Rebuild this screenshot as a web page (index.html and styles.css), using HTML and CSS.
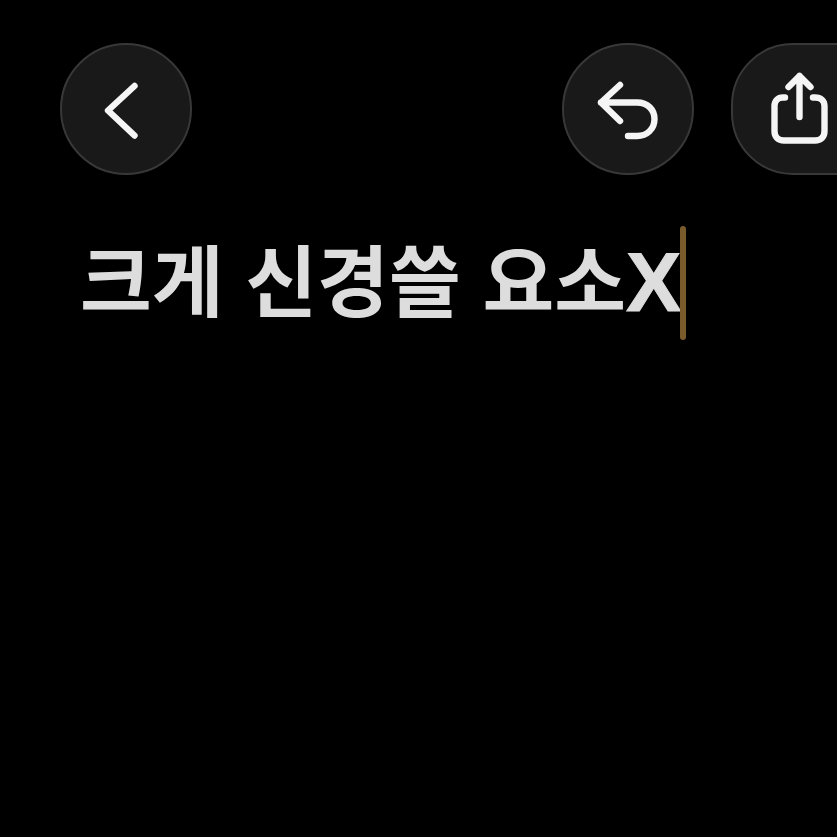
FILE: index.html
```
<!DOCTYPE html>
<html lang="ko">
<head>
<meta charset="utf-8">
<title>크게 신경쓸 요소X</title>
<link rel="stylesheet" href="styles.css">
</head>
<body>
<div class="screen">
  <header class="toolbar">
    <button class="round" aria-label="뒤로">
      <svg class="icon" viewBox="0 0 127 127"><path d="M71.500 40 L45 64.500 L71.500 89.500"/></svg>
    </button>
    <div class="spacer"></div>
    <button class="round" aria-label="실행 취소">
      <svg class="icon" viewBox="0 0 127 127"><path d="M55 39 L36 56.500 L55 75 M36 56.500 H72 C83 56.500 89.500 64 89.500 73 C89.500 83 82 90 72 90 H63"/></svg>
    </button>
    <button class="round wide" aria-label="공유">
      <svg class="icon" viewBox="0 0 127 127"><path d="M65.500 71 V30 M54.500 41 L65.500 30 L76.500 41 M51 51.500 H49 C43.500 51.500 40.500 55 40.500 60 V85 C40.500 91 44 94.500 50 94.500 H81 C87 94.500 90.500 91 90.500 85 V60 C90.500 55 87 51.500 81 51.500 H79"/></svg>
    </button>
  </header>
  <div class="editor">
    <h1 class="title">크게 신경쓸 요소<span class="latin">X</span></h1><span class="caret"></span>
  </div>
</div>
</body>
</html>
```
FILE: styles.css
```
html, body {
  margin: 0;
  padding: 0;
  background: #000;
}
.screen {
  width: 837px;
  height: 837px;
  overflow: hidden;
  background: #000;
}
.toolbar {
  display: flex;
  align-items: center;
  gap: 37px;
  padding: 43px 0 0 60px;
  width: 1000px;
}
.spacer {
  width: 296px;
}
.round {
  flex: none;
  width: 132px;
  height: 132px;
  padding: 0 0 0 1px;
  border: 2px solid #383838;
  border-radius: 66px;
  background: #191919;
  box-sizing: border-box;
  display: flex;
  align-items: center;
  justify-content: flex-start;
}
.wide {
  width: 180px;
  border-radius: 62px 0 0 62px;
}
.icon {
  width: 127px;
  height: 127px;
  fill: none;
  stroke: #f5f5f5;
  stroke-width: 6.400;
  stroke-linecap: round;
  stroke-linejoin: round;
}
.editor {
  display: flex;
  align-items: flex-start;
  padding: 51px 0 0 80px;
}
.title {
  margin: 0;
  font-family: "Noto Sans CJK KR", "Liberation Sans", sans-serif;
  font-size: 78px;
  font-weight: 700;
  line-height: 102px;
  color: #dddddd;
  white-space: nowrap;
}
.latin {
  font-family: "Liberation Sans", sans-serif;
  font-size: 83px;
  -webkit-text-stroke: 1px #dddddd;
}
.caret {
  flex: none;
  width: 6px;
  height: 114px;
  margin-left: -1px;
  border-radius: 3px;
  background: #7a5c2c;
}
```
